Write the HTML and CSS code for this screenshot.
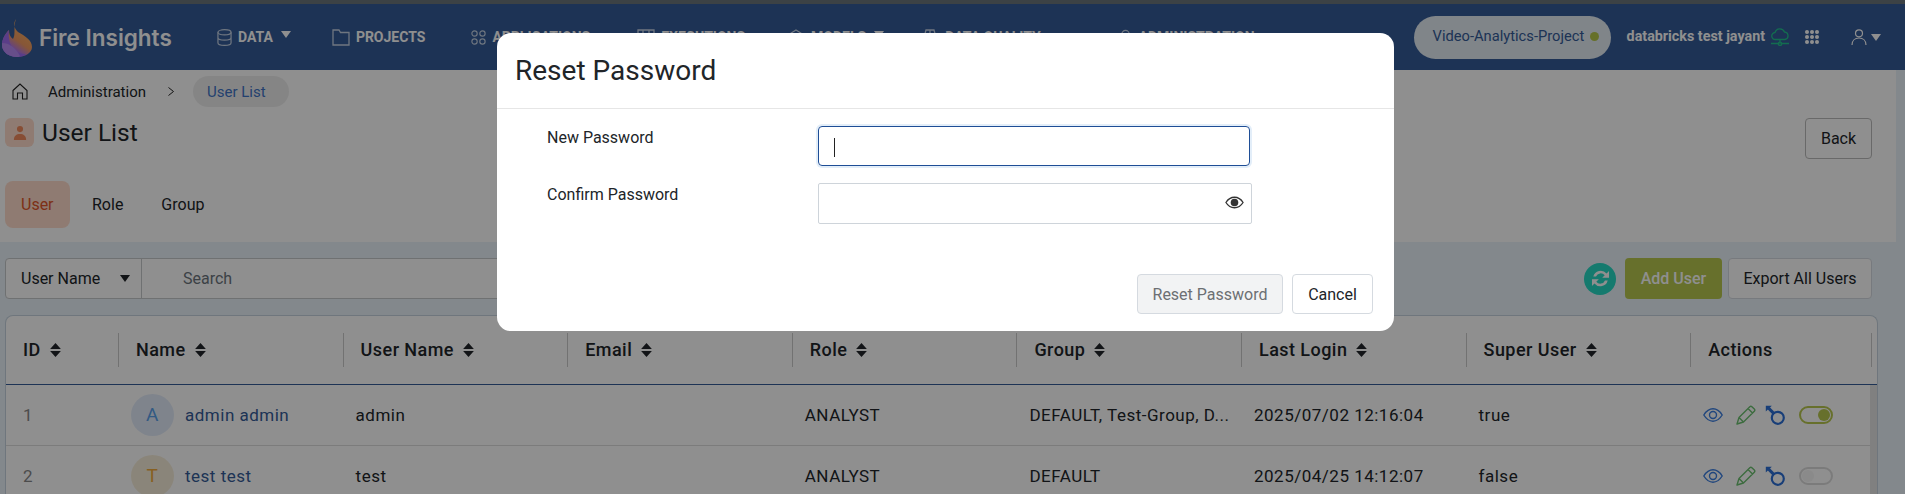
FILE: index.html
```html
<!DOCTYPE html>
<html lang="en">
<head>
    <meta charset="UTF-8">
    <meta name="viewport" content="width=device-width, initial-scale=1.0">
    <title>Fire Insights - User List</title>
    <link rel="stylesheet" href="styles.css">
</head>
<body>
    <svg class="icon-defs" aria-hidden="true">
        <symbol id="i-sort" viewBox="0 0 10 13"><path d="M5 0 10 5.500H0zM5 13 0 7.500h10z" fill="currentColor"/></symbol>
        <symbol id="i-eye" viewBox="0 0 20 14"><path d="M.8 7c2.500-4 5.700-6.200 9.200-6.200s6.700 2.200 9.200 6.200c-2.500 4-5.700 6.200-9.200 6.200S3.300 11 .8 7z" fill="none" stroke="currentColor" stroke-width="1.400"/><circle cx="10" cy="7" r="3.500" fill="none" stroke="currentColor" stroke-width="1.400"/></symbol>
        <symbol id="i-pencil" viewBox="0 0 20 20"><path d="M1 19 3 12.500 13.800 1.700a1.500 1.500 0 0 1 2.100 0l2.400 2.400a1.500 1.500 0 0 1 0 2.100L7.500 17zM3 12.500 7.500 17M12 3.500l4.500 4.500" fill="none" stroke="currentColor" stroke-width="1.400" stroke-linejoin="round"/></symbol>
        <symbol id="i-key" viewBox="0 0 20 20"><circle cx="12.800" cy="12.800" r="6" fill="none" stroke="currentColor" stroke-width="2.200"/><path d="M8.800 8.500 3.500 3" fill="none" stroke="currentColor" stroke-width="3.200"/><path d="M.8.800h6L.8 6.500z" fill="currentColor"/></symbol>
    </svg>

    <div class="top-strip"></div>

    <header class="navbar">
        <div class="brand">
            <svg class="brand-logo" viewBox="0 0 30 38">
                <defs>
                    <linearGradient id="flame" x1="0.8" y1="0.1" x2="0.3" y2="0.95">
                        <stop offset="0" stop-color="#ffb45c"/>
                        <stop offset="0.55" stop-color="#f09a62"/>
                        <stop offset="0.85" stop-color="#a670ff"/>
                    </linearGradient>
                </defs>
                <path d="M14 0c-3 5-2 9 2 13 7 4 14 8 14 15 0 6-7 10-15 10S0 33 0 26c0-6 3-11 7-15 0 4 1 7 4 9 3-5 0-12 3-20z" fill="url(#flame)"/>
                <path d="M7 11C3 15 0 20 0 26c0 7 7 12 15 12 4 0 7-1 9-3C14 35 5 28 7 11z" fill="#a06ef2"/>
                <path d="M0 24c7 0 13 4 18 13-1 1-2 1-3 1C7 38 0 33 0 26z" fill="#b88cf5"/>
            </svg>
            <span class="brand-name">Fire Insights</span>
        </div>
        <nav class="nav-menu">
            <a class="nav-item">
                <svg class="nav-icon" viewBox="0 0 16 18"><ellipse cx="8" cy="3.500" rx="7" ry="2.800"/><path d="M1 3.500v11c0 1.500 3 2.800 7 2.800s7-1.300 7-2.800v-11M1 9c0 1.500 3 2.800 7 2.800s7-1.300 7-2.800"/></svg>
                DATA <i class="caret"></i>
            </a>
            <a class="nav-item">
                <svg class="nav-icon wide" viewBox="0 0 18 17"><path d="M1 16V1h6l1.500 2.500H17V16z"/></svg>
                PROJECTS
            </a>
            <a class="nav-item apps">
                <svg class="nav-icon" viewBox="0 0 17 17"><circle cx="4" cy="4" r="3"/><circle cx="13" cy="4" r="3"/><circle cx="4" cy="13" r="3"/><circle cx="13" cy="13" r="3"/></svg>
                APPLICATIONS
            </a>
            <a class="nav-item execs">
                <svg class="nav-icon wide" viewBox="0 0 18 17"><path d="M1 1h16v15H1zM6 1v5h6V1"/></svg>
                EXECUTIONS
            </a>
            <a class="nav-item models">
                <svg class="nav-icon wide" viewBox="0 0 18 17"><path d="M9 1 17 6v6l-8 4-8-4V6z"/></svg>
                MODELS <i class="caret"></i>
            </a>
            <a class="nav-item quality">
                <svg class="nav-icon wide" viewBox="0 0 18 17"><path d="M5 1h8l4 15H1zM9 1v15"/></svg>
                DATA QUALITY
            </a>
            <a class="nav-item admin">
                <svg class="nav-icon" viewBox="0 0 16 17"><circle cx="8" cy="5" r="4"/><path d="M1 16c0-4 3-6 7-6s7 2 7 6z"/></svg>
                ADMINISTRATION
            </a>
        </nav>
        <div class="nav-right">
            <div class="project-pill">Video-Analytics-Project <span class="status-dot"></span></div>
            <span class="nav-user">databricks test jayant</span>
            <svg class="cloud-icon" viewBox="0 0 18 18"><path d="M4.500 11.500a3.500 3.500 0 0 1-.5-7 5 5 0 0 1 9.500-.5 3.800 3.800 0 0 1 .5 7.500zM9 11.500v4.500M0 15.500h7M11 15.500h7"/><circle cx="9" cy="15.800" r="1.700"/></svg>
            <div class="apps-grid"><i></i><i></i><i></i><i></i><i></i><i></i><i></i><i></i><i></i></div>
            <svg class="user-icon" viewBox="0 0 16 16"><circle cx="8" cy="4.300" r="3.500"/><path d="M1 16c0-4.500 3-7 7-7s7 2.500 7 7"/></svg>
            <i class="caret"></i>
        </div>
    </header>

    <main class="content">
        <section class="page-head">
            <div class="breadcrumb">
                <svg class="home-icon" viewBox="0 0 16 17"><path d="M1 7.500 8 1l7 6.500V16h-4.500v-6h-5v6H1z"/></svg>
                <span>Administration</span>
                <svg class="crumb-sep" viewBox="0 0 6 9"><path d="M.5.500 5.500 4.500.5 8.500"/></svg>
                <span class="crumb-active">User List</span>
            </div>
            <div class="title-row">
                <span class="title-icon">
                    <svg viewBox="0 0 16 18"><circle cx="8" cy="4.500" r="3.500"/><path d="M1 17c0-5 3-7 7-7s7 2 7 7z"/></svg>
                </span>
                <h1>User List</h1>
                <button class="btn back-btn">Back</button>
            </div>
            <div class="tabs">
                <span class="tab active">User</span>
                <span class="tab">Role</span>
                <span class="tab">Group</span>
            </div>
        </section>

        <section class="toolbar">
            <div class="search-box">
                <div class="search-select">User Name <i class="caret"></i></div>
                <div class="search-input">Search</div>
            </div>
            <span class="refresh-btn">
                <svg viewBox="0 0 16 16"><path d="M2.500 6.500A5.800 5.800 0 0 1 12.600 4.200L14.500 2.300V7.500H9.300l1.900-1.900A3.800 3.800 0 0 0 4.600 6.500zM13.500 9.500A5.800 5.800 0 0 1 3.400 11.800L1.500 13.700V8.500h5.200l-1.900 1.900a3.800 3.800 0 0 0 6.600-.9z"/></svg>
            </span>
            <button class="btn add-btn">Add User</button>
            <button class="btn export-btn">Export All Users</button>
        </section>

        <section class="table-card">
            <table class="user-table">
                <colgroup>
                    <col class="col-id">
                    <col class="col-wide">
                    <col class="col-wide">
                    <col class="col-wide">
                    <col class="col-wide">
                    <col class="col-wide">
                    <col class="col-wide">
                    <col class="col-wide">
                    <col>
                </colgroup>
                <thead>
                    <tr>
                        <th><div>ID <svg class="sort"><use href="#i-sort"/></svg></div></th>
                        <th><div>Name <svg class="sort"><use href="#i-sort"/></svg></div></th>
                        <th><div>User Name <svg class="sort"><use href="#i-sort"/></svg></div></th>
                        <th><div>Email <svg class="sort"><use href="#i-sort"/></svg></div></th>
                        <th><div>Role <svg class="sort"><use href="#i-sort"/></svg></div></th>
                        <th><div>Group <svg class="sort"><use href="#i-sort"/></svg></div></th>
                        <th><div>Last Login <svg class="sort"><use href="#i-sort"/></svg></div></th>
                        <th><div>Super User <svg class="sort"><use href="#i-sort"/></svg></div></th>
                        <th><div>Actions</div></th>
                    </tr>
                </thead>
                <tbody>
                    <tr>
                        <td class="cell-id">1</td>
                        <td><div class="name-cell"><span class="avatar blue">A</span><span class="user-link">admin admin</span></div></td>
                        <td>admin</td>
                        <td></td>
                        <td>ANALYST</td>
                        <td>DEFAULT, Test-Group, D...</td>
                        <td>2025/07/02 12:16:04</td>
                        <td>true</td>
                        <td>
                            <div class="actions">
                                <svg class="a-eye"><use href="#i-eye"/></svg>
                                <svg class="a-pencil"><use href="#i-pencil"/></svg>
                                <svg class="a-key"><use href="#i-key"/></svg>
                                <span class="toggle on"></span>
                            </div>
                        </td>
                    </tr>
                    <tr>
                        <td class="cell-id">2</td>
                        <td><div class="name-cell"><span class="avatar amber">T</span><span class="user-link">test test</span></div></td>
                        <td>test</td>
                        <td></td>
                        <td>ANALYST</td>
                        <td>DEFAULT</td>
                        <td>2025/04/25 14:12:07</td>
                        <td>false</td>
                        <td>
                            <div class="actions">
                                <svg class="a-eye"><use href="#i-eye"/></svg>
                                <svg class="a-pencil"><use href="#i-pencil"/></svg>
                                <svg class="a-key"><use href="#i-key"/></svg>
                                <span class="toggle"></span>
                            </div>
                        </td>
                    </tr>
                </tbody>
            </table>
            <div class="table-scroll"></div>
        </section>
    </main>

    <div class="backdrop"></div>

    <div class="modal">
        <div class="modal-header">Reset Password</div>
        <div class="modal-body">
            <div class="form-row">
                <label>New Password</label>
                <div class="field focused"><span class="cursor"></span></div>
            </div>
            <div class="form-row">
                <label>Confirm Password</label>
                <div class="field">
                    <svg class="field-eye" viewBox="0 0 20 13"><path d="M1 6.500C3.500 2.500 6.500 1 10 1s6.500 1.500 9 5.500c-2.500 4-5.500 5.500-9 5.500s-6.500-1.500-9-5.500z" fill="none" stroke="#333" stroke-width="1.400"/><circle cx="10" cy="6.500" r="4" fill="#333"/></svg>
                </div>
            </div>
        </div>
        <div class="modal-footer">
            <button class="btn reset-btn">Reset Password</button>
            <button class="btn cancel-btn">Cancel</button>
        </div>
    </div>
</body>
</html>
```

FILE: styles.css
```css
* {
    box-sizing: border-box;
}
html, body {
    height: 100%;
}
body {
    margin: 0;
    overflow: hidden;
    font-family: Roboto, "Liberation Sans", sans-serif;
    font-size: 16px;
    color: #212529;
    background-color: #eaf3fa;
}
.icon-defs {
    display: none;
}
.top-strip {
    height: 4px;
    background-color: #3c4245;
}
.caret {
    display: inline-block;
    width: 0;
    height: 0;
    border-left: 5px solid transparent;
    border-right: 5px solid transparent;
    border-top: 7px solid currentColor;
}

/* navbar */
.navbar {
    display: flex;
    align-items: center;
    height: 66px;
    padding-left: 2px;
    background-color: #345b98;
    color: #fff;
}
.brand {
    display: flex;
    align-items: center;
    gap: 7px;
    width: 215px;
    flex: none;
}
.brand-logo {
    width: 30px;
    height: 38px;
    margin-top: 2px;
}
.brand-name {
    font-family: Inter, "Open Sans", sans-serif;
    font-size: 22.5px;
    font-weight: 600;
}
.nav-menu {
    display: flex;
    align-items: center;
    gap: 41px;
    flex: none;
}
.nav-item {
    display: flex;
    align-items: center;
    gap: 6px;
    font-size: 14px;
    font-weight: 700;
    white-space: nowrap;
}
.nav-item .caret {
    margin: -6px 0 0 2px;
}
.nav-item.apps {
    margin-left: 5px;
}
.nav-item.execs {
    margin-left: 6px;
}
.nav-item.models {
    margin-left: 1px;
}
.nav-item.quality {
    margin-left: -4px;
}
.nav-item.admin {
    margin-left: 36px;
}
.nav-icon {
    width: 15px;
    height: 17px;
    fill: none;
    stroke: #c6d3e4;
    stroke-width: 1.300;
}
.nav-icon.wide {
    width: 18px;
}
.nav-right {
    display: flex;
    align-items: center;
    margin-left: auto;
    padding-right: 24px;
    flex: none;
}
.project-pill {
    display: flex;
    align-items: center;
    gap: 6px;
    width: 197px;
    height: 43px;
    margin-right: 16px;
    padding: 0 0 2px 19px;
    border-radius: 22px;
    background-color: #e4edf5;
    color: #345b98;
    font-size: 14.7px;
}
.status-dot {
    width: 9px;
    height: 9px;
    border-radius: 50%;
    background-color: #b6c84a;
}
.nav-user {
    font-size: 14.3px;
    font-weight: 700;
    margin: -2px 6px 0 0;
}
.cloud-icon {
    width: 18px;
    height: 18px;
    margin-right: 16px;
    fill: none;
    stroke: #22c38e;
    stroke-width: 1.300;
}
.apps-grid {
    display: grid;
    grid-template-columns: repeat(3, 4px);
    gap: 1px;
    margin-right: 32px;
}
.apps-grid i {
    width: 4px;
    height: 4px;
    border-radius: 50%;
    background-color: #fff;
}
.user-icon {
    width: 16px;
    height: 16px;
    margin-right: 4px;
    fill: none;
    stroke: #fff;
    stroke-width: 1.200;
}

/* page header */
.page-head {
    margin-right: 9px;
    padding: 6px 24px 14px 5px;
    background-color: #fff;
}
.breadcrumb {
    display: flex;
    align-items: center;
    height: 31px;
    padding-left: 7px;
    font-size: 15px;
}
.home-icon {
    width: 16px;
    height: 17px;
    margin-right: 20px;
    fill: none;
    stroke: #222;
    stroke-width: 1.100;
}
.crumb-sep {
    width: 6px;
    height: 9px;
    margin: 0 19px 0 22px;
    fill: none;
    stroke: #222;
    stroke-width: 1;
}
.crumb-active {
    display: flex;
    align-items: center;
    height: 31px;
    padding: 0 23px 0 14px;
    border-radius: 16px;
    background-color: #eee;
    color: #3f74c6;
}
.title-row {
    display: flex;
    align-items: flex-start;
    height: 41px;
    margin-top: 11px;
}
.title-icon {
    display: flex;
    align-items: center;
    justify-content: center;
    width: 29px;
    height: 29px;
    margin-right: 8px;
    border-radius: 6px;
    background-color: #ffdccb;
}
.title-icon svg {
    width: 14px;
    height: 16px;
    fill: #f08a5d;
}
h1 {
    margin: 0;
    font-size: 24.5px;
    font-weight: 400;
    line-height: 29px;
}
.btn {
    height: 41px;
    padding: 0;
    border: 1px solid #d5dae0;
    border-radius: 4px;
    background-color: #fff;
    color: #212529;
    font-family: inherit;
    font-size: 16px;
}
.back-btn {
    width: 67px;
    margin-left: auto;
    border-color: #bbb;
}
.tabs {
    display: flex;
    align-items: center;
    height: 47px;
    margin-top: 22px;
}
.tab {
    display: flex;
    align-items: center;
    height: 47px;
    padding: 0 19px;
}
.tab.active {
    width: 65px;
    padding: 0 16px;
    border-radius: 8px;
    background-color: #ffdccb;
    color: #e0562a;
    margin-right: 3px;
}

/* search and buttons */
.toolbar {
    display: flex;
    align-items: center;
    padding: 16px 33px 0 5px;
}
.search-box {
    display: flex;
    width: 700px;
    height: 41px;
    border: 1px solid #c6c9cc;
    border-radius: 4px;
    background-color: #fff;
    margin-right: auto;
}
.search-select {
    display: flex;
    align-items: center;
    justify-content: space-between;
    width: 136px;
    padding: 0 11px 0 15px;
    border-right: 1px solid #c6c9cc;
}
.search-input {
    display: flex;
    align-items: center;
    padding-left: 41px;
    color: #6c757d;
}
.refresh-btn {
    display: flex;
    align-items: center;
    justify-content: center;
    width: 32px;
    height: 32px;
    margin-right: 9px;
    border-radius: 50%;
    background-color: #26d9c4;
}
.refresh-btn svg {
    width: 21px;
    height: 21px;
    fill: #fff;
}
.add-btn {
    width: 97px;
    margin-right: 6px;
    border: none;
    background-color: #b8c84f;
    color: #fff;
    font-weight: 500;
}
.export-btn {
    width: 144px;
}

/* table */
.table-card {
    position: relative;
    height: 179px;
    margin: 16px 27px 0 5px;
    overflow: hidden;
    border: 1px solid #c6d3df;
    border-bottom: none;
    border-radius: 8px 8px 0 0;
    background-color: #fff;
}
.user-table {
    width: 100%;
    table-layout: fixed;
    border-collapse: collapse;
}
.col-id {
    width: 113px;
}
.col-wide {
    width: 224.6px;
}
thead tr {
    height: 68px;
    border-bottom: 1px solid #345b98;
}
th {
    padding: 0;
    font-size: 18px;
    font-weight: 500;
    letter-spacing: 0.45px;
    text-align: left;
}
th div {
    display: flex;
    align-items: center;
    gap: 9px;
    height: 34px;
    padding-left: 17px;
    border-right: 1px solid #ccc;
}
th:last-child div {
    margin-right: 5px;
}
.sort {
    width: 11px;
    height: 14px;
}
tbody tr {
    height: 61px;
    border-bottom: 1px solid #ddd;
}
td {
    padding: 0 12px;
    font-size: 17px;
    letter-spacing: 0.5px;
    white-space: nowrap;
}
td.cell-id {
    padding-left: 17px;
    color: #888;
}
.name-cell {
    display: flex;
    align-items: center;
    gap: 11px;
}
.avatar {
    display: flex;
    align-items: center;
    justify-content: center;
    width: 43px;
    height: 42px;
    border-radius: 50%;
    font-size: 19px;
}
.avatar.blue {
    background-color: #e3ecfa;
    color: #5aa0ea;
}
.avatar.amber {
    background-color: #f7eeda;
    color: #f0a93a;
}
.user-link {
    color: #345b98;
}
.actions {
    display: flex;
    align-items: center;
}
.actions svg {
    flex: none;
}
.a-eye {
    width: 20px;
    height: 14px;
    margin-right: 13px;
    color: #3a7de0;
}
.a-pencil {
    width: 20px;
    height: 20px;
    margin-right: 9px;
    color: #6cc070;
}
.a-key {
    width: 20px;
    height: 20px;
    margin-right: 14px;
    color: #2c6fd6;
}
.toggle {
    position: relative;
    display: block;
    width: 34px;
    height: 18px;
    flex: none;
    border: 2px solid #dcdcdc;
    border-radius: 9px;
}
.toggle::after {
    content: "";
    position: absolute;
    top: 1px;
    left: 1px;
    width: 12px;
    height: 12px;
    border-radius: 50%;
    background-color: #f6f6f6;
}
.toggle.on {
    border-color: #b8c84f;
}
.toggle.on::after {
    left: auto;
    right: 1px;
    background-color: #b8c84f;
}
.table-scroll {
    position: absolute;
    top: 69px;
    right: 0;
    bottom: 0;
    width: 7px;
    background-color: #e4e4e4;
}

/* reset password dialog */
.backdrop {
    position: fixed;
    top: 4px;
    right: 0;
    bottom: 0;
    left: 0;
    background-color: rgba(0, 0, 0, 0.44);
}
.modal {
    position: fixed;
    top: 33px;
    left: 497px;
    display: flex;
    flex-direction: column;
    width: 897px;
    height: 298px;
    border-radius: 14px;
    background-color: #fff;
}
.modal-header {
    height: 76px;
    padding: 21px 18px 0;
    border-bottom: 1px solid #e6e6e6;
    font-size: 28px;
}
.modal-body {
    padding: 17px 0 0 50px;
}
.form-row {
    display: flex;
    height: 57px;
}
.form-row label {
    width: 271px;
    padding-top: 2px;
}
.field {
    position: relative;
    width: 434px;
    height: 41px;
    border: 1px solid #ced4da;
    border-radius: 2px;
}
.field.focused {
    width: 432px;
    height: 40px;
    border-color: #1f4e96;
    border-radius: 4px;
    box-shadow: 0 0 0 2px #e3eef9;
}
.cursor {
    position: absolute;
    top: 11px;
    left: 15px;
    width: 1px;
    height: 19px;
    background-color: #222;
}
.field-eye {
    position: absolute;
    top: 12px;
    right: 7px;
    width: 19px;
    height: 13px;
}
.modal-footer {
    display: flex;
    justify-content: flex-end;
    gap: 9px;
    margin-top: auto;
    padding: 0 21px 17px 0;
}
.reset-btn {
    width: 146px;
    height: 40px;
    background-color: #f2f3f4;
    color: #6c6f73;
}
.cancel-btn {
    width: 81px;
    height: 40px;
}
```
